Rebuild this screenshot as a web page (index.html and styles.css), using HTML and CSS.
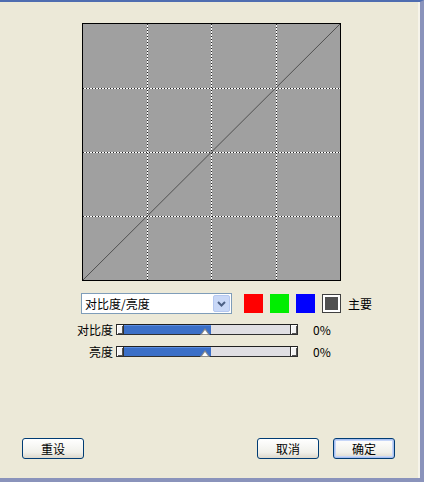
FILE: index.html
```html
<!DOCTYPE html>
<html lang="zh-CN">
<head>
  <meta charset="UTF-8">
  <title>曲线</title>
  <link rel="stylesheet" href="styles.css">
</head>
<body>
  <div class="dialog">
    <div class="graph">
      <svg width="259" height="258" viewBox="0 0 259 258">
        <rect x="0.5" y="0.5" width="258" height="257" fill="#a0a0a0" stroke="#000"/>
        <g stroke="#fff" stroke-width="1">
          <line x1="65.5" y1="1" x2="65.5" y2="257"/>
          <line x1="129.5" y1="1" x2="129.5" y2="257"/>
          <line x1="194.5" y1="1" x2="194.5" y2="257"/>
          <line x1="1" y1="65.5" x2="258" y2="65.5"/>
          <line x1="1" y1="129.5" x2="258" y2="129.5"/>
          <line x1="1" y1="193.5" x2="258" y2="193.5"/>
        </g>
        <g stroke="#202020" stroke-width="1" stroke-dasharray="1 2">
          <line x1="65.5" y1="1" x2="65.5" y2="257"/>
          <line x1="129.5" y1="1" x2="129.5" y2="257"/>
          <line x1="194.5" y1="1" x2="194.5" y2="257"/>
          <line x1="1" y1="65.5" x2="258" y2="65.5"/>
          <line x1="1" y1="129.5" x2="258" y2="129.5"/>
          <line x1="1" y1="193.5" x2="258" y2="193.5"/>
        </g>
        <line x1="1" y1="257" x2="258" y2="1" stroke="#505050" stroke-width="1"/>
      </svg>
    </div>

    <div class="channel-row">
      <div class="select">
        <span class="select-text">对比度/亮度</span>
        <span class="select-btn">
          <svg width="9" height="6" viewBox="0 0 9 6"><path d="M1 1 L4.5 4.5 L8 1" fill="none" stroke="#4d6185" stroke-width="2"/></svg>
        </span>
      </div>
      <span class="swatch red"></span>
      <span class="swatch green"></span>
      <span class="swatch blue"></span>
      <span class="swatch master"></span>
      <span class="swatch-label">主要</span>
    </div>

    <div class="sliders">
      <div class="slider-row">
        <span class="slider-label">对比度</span>
        <div class="track">
          <span class="end left"></span>
          <span class="fill" style="width: 87px"></span>
          <span class="thumb" style="left: 88px"></span>
          <span class="end right"></span>
        </div>
        <span class="value">0%</span>
      </div>
      <div class="slider-row">
        <span class="slider-label">亮度</span>
        <div class="track">
          <span class="end left"></span>
          <span class="fill" style="width: 87px"></span>
          <span class="thumb" style="left: 88px"></span>
          <span class="end right"></span>
        </div>
        <span class="value">0%</span>
      </div>
    </div>

    <div class="buttons">
      <button class="btn">重设</button>
      <span class="spacer"></span>
      <button class="btn">取消</button>
      <button class="btn default">确定</button>
    </div>

    <span class="scroll-mark top-right"></span>
    <span class="scroll-mark bottom-left"></span>
  </div>
</body>
</html>
```

FILE: styles.css
```css
body {
  margin: 0;
  background: #ece9d8;
  font-family: "Noto Sans CJK SC", "DejaVu Sans", sans-serif;
  font-size: 12px;
  color: #000;
}
.dialog {
  position: relative;
  box-sizing: border-box;
  width: 424px;
  height: 482px;
  background: #ece9d8;
  border-top: 2px solid #4f6db0;
  border-right: 4px solid #8a93bb;
  border-bottom: 4px solid #8a93bb;
  box-shadow: inset -2px 0 0 #f6f4ea;
  overflow: hidden;
}
.graph {
  margin: 21px 0 0 82px;
  height: 258px;
}
.graph svg {
  display: block;
}
.channel-row {
  display: flex;
  align-items: center;
  margin: 12px 0 0 81px;
  height: 21px;
}
.select {
  box-sizing: border-box;
  width: 151px;
  height: 21px;
  border: 1px solid #7f9db9;
  background: #fff;
  display: flex;
  align-items: center;
  justify-content: space-between;
  padding: 0 1px 0 3px;
}
.select-text {
  font-size: 12px;
  line-height: 17px;
}
.select-btn {
  box-sizing: border-box;
  width: 17px;
  height: 17px;
  background: #c9d8f7;
  border: 1px solid #b5c8f0;
  border-radius: 2px;
  display: flex;
  align-items: center;
  justify-content: center;
}
.swatch {
  box-sizing: border-box;
  width: 19px;
  height: 19px;
  margin-left: 7px;
}
.swatch.red {
  margin-left: 12px;
  background: #ff0000;
}
.swatch.green {
  background: #00ee00;
}
.swatch.blue {
  background: #0000ff;
}
.swatch.master {
  background: #505050;
  border: 1px solid #404040;
  box-shadow: inset 0 0 0 2px #fff;
}
.swatch-label {
  margin-left: 7px;
}
.sliders {
  margin-top: 4px;
}
.slider-row {
  display: flex;
  align-items: center;
  height: 22px;
}
.slider-label {
  box-sizing: border-box;
  width: 116px;
  padding-right: 3px;
  text-align: right;
}
.track {
  position: relative;
  box-sizing: border-box;
  width: 182px;
  height: 11px;
  border: 1px solid #303030;
  border-top-color: #202020;
  background: #e0dfe3;
  display: flex;
  align-items: stretch;
}
.fill {
  display: block;
  background: #3b6fc7;
  box-shadow: inset 0 1px 0 #5b8de0;
}
.end {
  display: block;
  width: 6px;
  background: #f4f4f4;
  border-right: 1px solid #303030;
  box-shadow: inset 2px 2px 0 -1px #fff, inset -2px -2px 0 -1px #555;
}
.end.right {
  position: absolute;
  right: 0;
  top: 0;
  bottom: 0;
  border-right: none;
  border-left: 1px solid #303030;
}
.thumb {
  position: absolute;
  bottom: -1px;
  width: 0;
  height: 0;
  margin-left: -5px;
  border-left: 5px solid transparent;
  border-right: 5px solid transparent;
  border-bottom: 7px solid #8a8a8a;
}
.thumb::after {
  content: "";
  position: absolute;
  left: -3px;
  top: 2px;
  border-left: 3px solid transparent;
  border-right: 3px solid transparent;
  border-bottom: 4px solid #fff;
}
.value {
  margin-left: 15px;
}
.buttons {
  display: flex;
  align-items: center;
  margin: 76px 0 0 22px;
  width: 373px;
}
.spacer {
  flex: 1;
}
.btn {
  box-sizing: border-box;
  width: 62px;
  height: 21px;
  margin-left: 14px;
  padding: 0;
  font-family: "Noto Sans CJK SC", "DejaVu Sans", sans-serif;
  font-size: 12px;
  color: #000;
  background: linear-gradient(#ffffff, #f0f0ea 70%, #dcd8cc);
  border: 1px solid #003c74;
  border-radius: 3px;
}
.btn:first-child {
  margin-left: 0;
}
.btn.default {
  box-shadow: inset 0 0 0 1px #a8c0f0, inset 0 0 0 2px #c6d6f8;
}
.scroll-mark {
  position: absolute;
  background: #2c4aa0;
}
.scroll-mark.top-right {
  right: -3px;
  top: 0;
  width: 2px;
  height: 62px;
}
.scroll-mark.bottom-left {
  left: 0;
  bottom: -4px;
  width: 35px;
  height: 3px;
}
```
